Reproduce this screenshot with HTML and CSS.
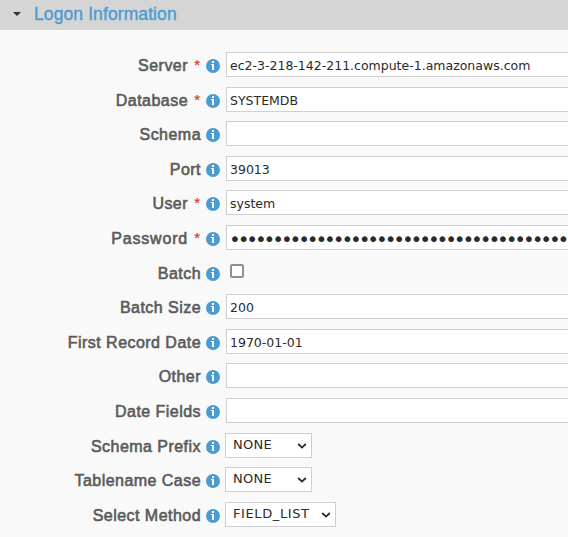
FILE: index.html
```
<!DOCTYPE html>
<html lang="en">
<head>
<meta charset="utf-8">
<title>Logon Information</title>
<link rel="stylesheet" href="styles.css">
</head>
<body>
<svg class="defs" width="0" height="0"><symbol id="info" viewBox="0 0 14 14"><circle cx="7" cy="7" r="7" fill="#4a9cd0"/><path d="M6 2h2v2H6zM5 5h3v6H6V6H5z" fill="#fff"/></symbol></svg>
<header class="bar"><span class="arrow"></span><h1>Logon Information</h1></header>
<form class="form">
<div class="row"><label>Server<i>*</i></label><svg class="info"><use href="#info"/></svg><div class="field">ec2-3-218-142-211.compute-1.amazonaws.com</div></div>
<div class="row"><label>Database<i>*</i></label><svg class="info"><use href="#info"/></svg><div class="field">SYSTEMDB</div></div>
<div class="row"><label>Schema</label><svg class="info"><use href="#info"/></svg><div class="field"></div></div>
<div class="row"><label>Port</label><svg class="info"><use href="#info"/></svg><div class="field">39013</div></div>
<div class="row"><label>User<i>*</i></label><svg class="info"><use href="#info"/></svg><div class="field">system</div></div>
<div class="row"><label class="loose">Password<i>*</i></label><svg class="info"><use href="#info"/></svg><div class="field dots">•••••••••••••••••••••••••••••••••••••••</div></div>
<div class="row"><label>Batch</label><svg class="info"><use href="#info"/></svg><span class="check"></span></div>
<div class="row"><label>Batch Size</label><svg class="info"><use href="#info"/></svg><div class="field">200</div></div>
<div class="row"><label>First Record Date</label><svg class="info"><use href="#info"/></svg><div class="field">1970-01-01</div></div>
<div class="row"><label>Other</label><svg class="info"><use href="#info"/></svg><div class="field"></div></div>
<div class="row"><label>Date Fields</label><svg class="info"><use href="#info"/></svg><div class="field"></div></div>
<div class="row"><label>Schema Prefix</label><svg class="info"><use href="#info"/></svg><div class="select"><span>NONE</span><svg class="chev" viewBox="0 0 10 6"><path d="M1.2 1 5 4.6 8.8 1"/></svg></div></div>
<div class="row"><label>Tablename Case</label><svg class="info"><use href="#info"/></svg><div class="select"><span>NONE</span><svg class="chev" viewBox="0 0 10 6"><path d="M1.2 1 5 4.6 8.8 1"/></svg></div></div>
<div class="row"><label>Select Method</label><svg class="info"><use href="#info"/></svg><div class="select wide"><span>FIELD_LIST</span><svg class="chev" viewBox="0 0 10 6"><path d="M1.2 1 5 4.6 8.8 1"/></svg></div></div>
</form>
</body>
</html>
```
FILE: styles.css
```
* { box-sizing: border-box; }
body { margin: 0; height: 537px; overflow: hidden; background: #f9f9f9; font-family: "Liberation Sans", Arial, sans-serif; }
.defs { display: block; }
.bar { display: flex; align-items: center; height: 30px; padding-left: 13px; background: #d5d5d5; }
.arrow { border: 4px solid transparent; border-top-color: #333; border-bottom: 0; margin: 0 13px 2px 0; }
h1 { margin: 0 0 3px; font-size: 17.5px; line-height: 24px; font-weight: 400; color: #4a9cd0; letter-spacing: .1px; -webkit-text-stroke: .35px #4a9cd0; white-space: nowrap; }
.form { padding-top: 18px; }
.row { display: grid; grid-template-columns: 201px 14px 1fr; column-gap: 5px; height: 34.6px; }
label { text-align: right; font-size: 16px; line-height: 36px; height: 34px; color: #5b5b5b; -webkit-text-stroke: .6px #5b5b5b; letter-spacing: .46px; white-space: nowrap; }
.loose { letter-spacing: .8px; }
label i { display: inline-block; width: 13px; padding-right: 1px; font-style: normal; font-size: 15px; line-height: 20px; letter-spacing: 0; vertical-align: 1px; color: #e22e2e; -webkit-text-stroke: .2px #e22e2e; }
.info { width: 14px; height: 14px; margin-top: 11px; }
.field { height: 25px; margin: 4px -2px 0 1px; padding-left: 3px; border: 1px solid #d0d0d0; background: #fff; color: #2a2a2a; font: 12.5px/25px "DejaVu Sans", Verdana, sans-serif; white-space: nowrap; overflow: hidden; }
.dots { font-size: 20px; line-height: 26px; letter-spacing: -3.15px; padding-left: 2px; }
.check { width: 14px; height: 14px; margin: 8px 0 0 5px; border: 2px solid #8f8f9d; border-radius: 2px; background: #fff; }
.select { display: flex; justify-content: space-between; align-items: center; width: 87px; height: 25px; margin: 4px 0 0 0; padding: 0 4px 1px 7px; border: 1px solid #d0d0d0; background: #fff; color: #2a2a2a; font: 13px/20px "DejaVu Sans", Verdana, sans-serif; letter-spacing: .3px; }
.wide { width: 111px; letter-spacing: .6px; }
.chev { width: 10px; height: 6px; margin-top: 2px; fill: none; stroke: #2a2a2a; stroke-width: 1.8; }
```
